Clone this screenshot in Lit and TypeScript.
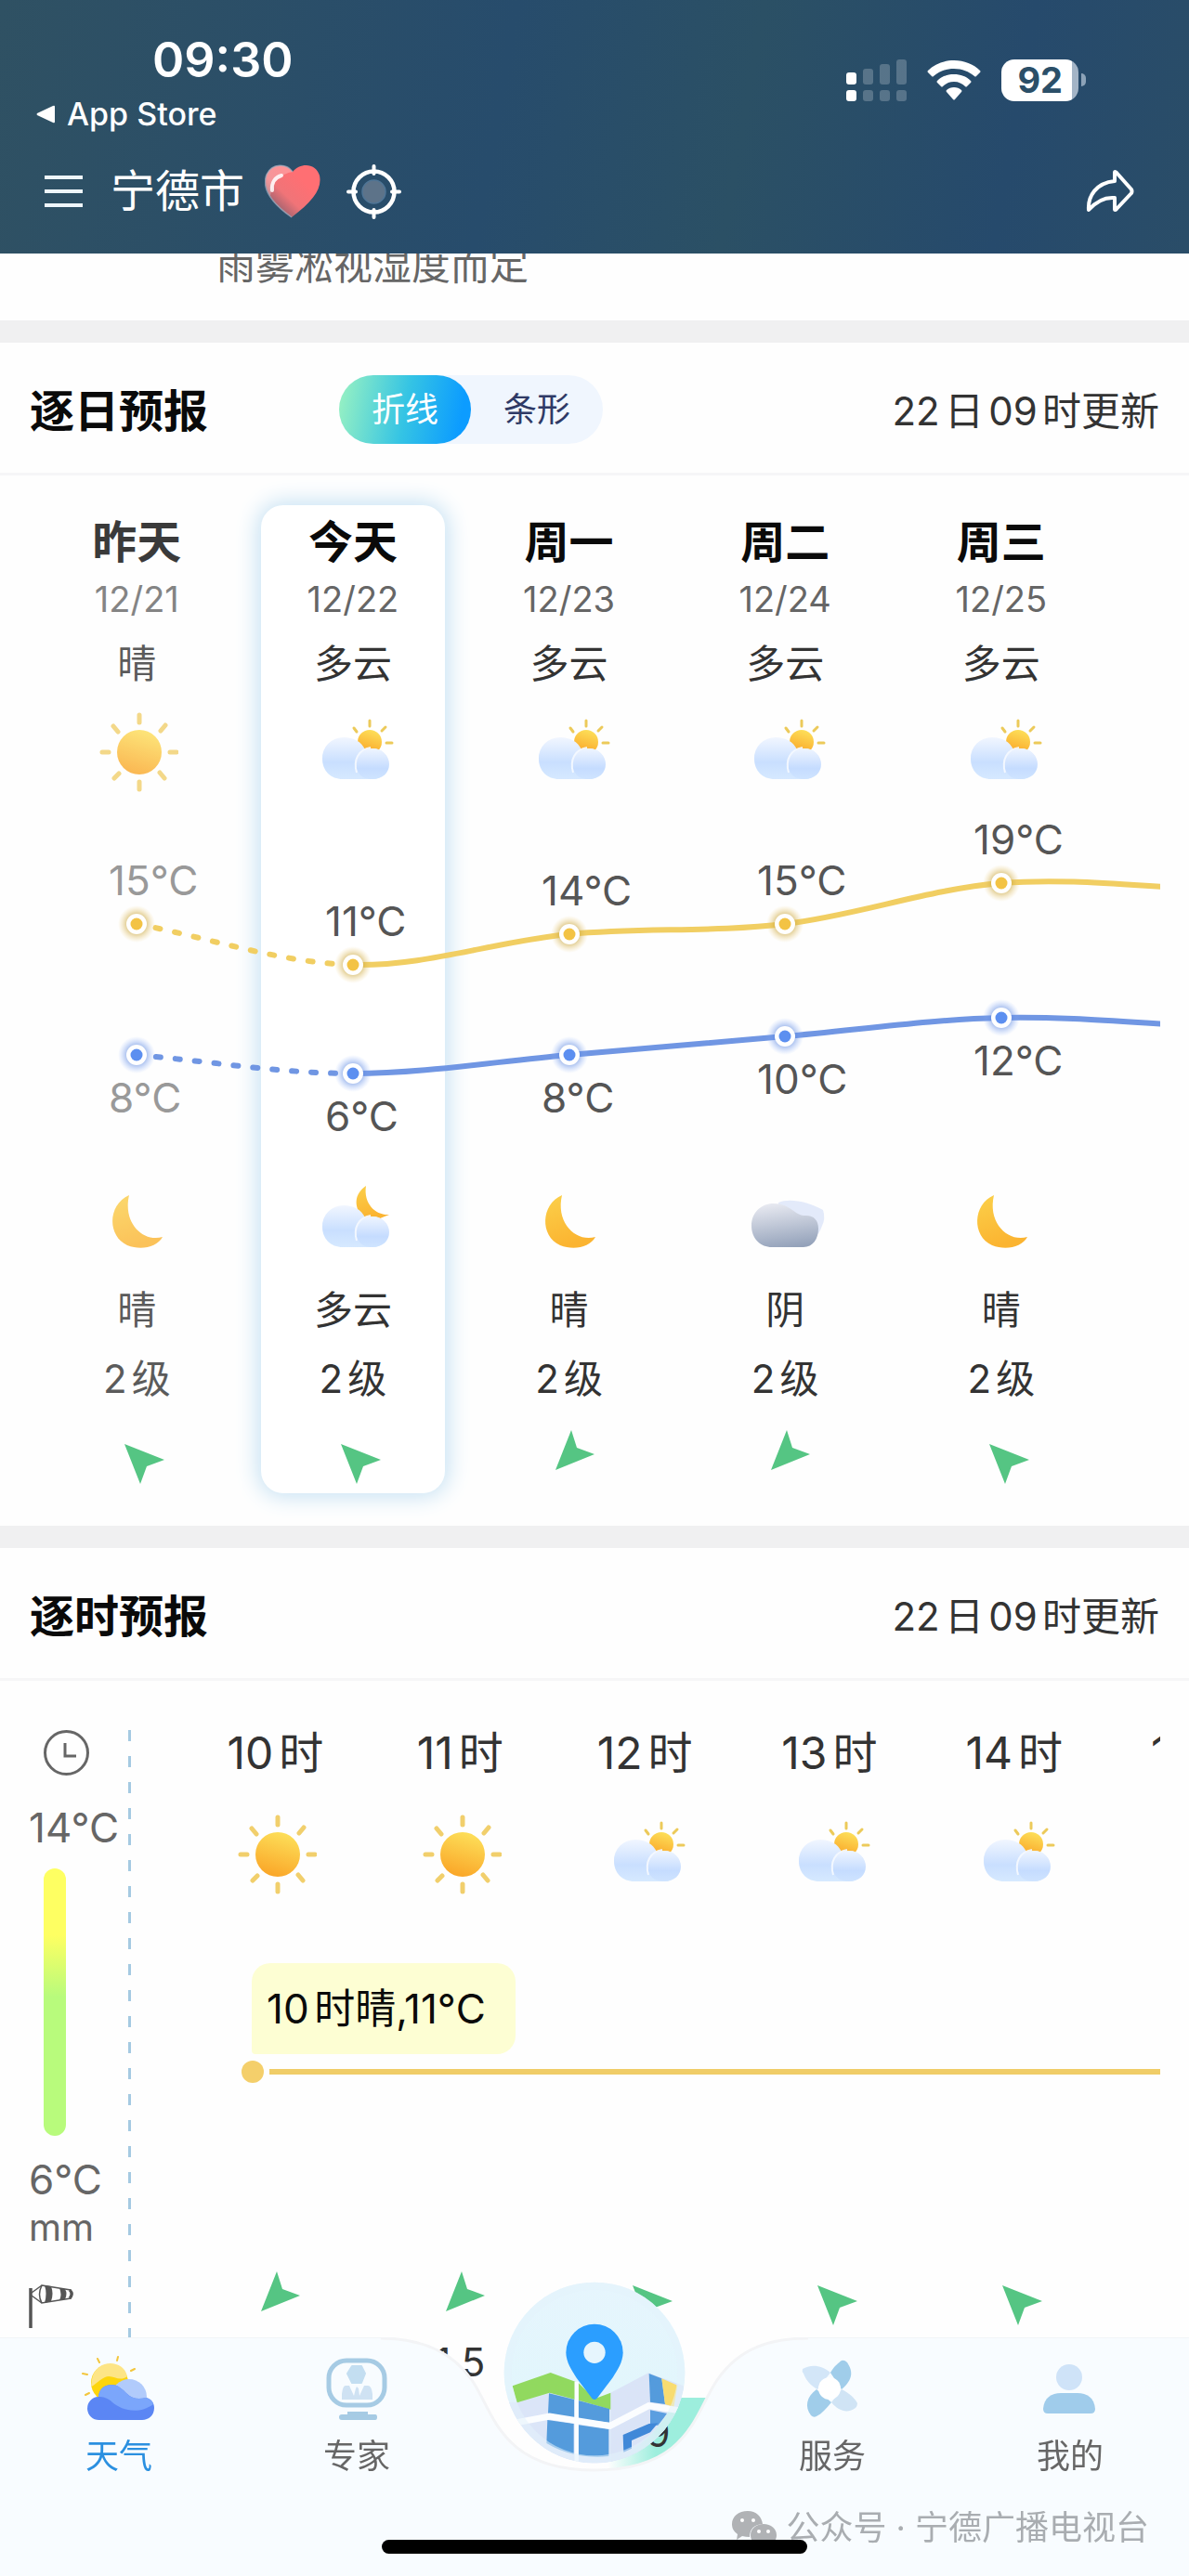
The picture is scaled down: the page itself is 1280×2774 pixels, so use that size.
import { LitElement, html, svg, css } from "lit";
import { customElement, state } from "lit/decorators.js";
import { classMap } from "lit/directives/class-map.js";

type Icon = "sun" | "sunCloud" | "moon" | "moonCloud" | "overcast";
type Wind = "nw" | "sw";

interface Day {
  name: string;
  date: string;
  text: string;
  icon: Icon;
  high: number;
  low: number;
  nightIcon: Icon;
  nightText: string;
  wind: Wind;
}

const DAYS: Day[] = [
  { name: "昨天", date: "12/21", text: "晴", icon: "sun", high: 15, low: 8, nightIcon: "moon", nightText: "晴", wind: "nw" },
  { name: "今天", date: "12/22", text: "多云", icon: "sunCloud", high: 11, low: 6, nightIcon: "moonCloud", nightText: "多云", wind: "nw" },
  { name: "周一", date: "12/23", text: "多云", icon: "sunCloud", high: 14, low: 8, nightIcon: "moon", nightText: "晴", wind: "sw" },
  { name: "周二", date: "12/24", text: "多云", icon: "sunCloud", high: 15, low: 10, nightIcon: "overcast", nightText: "阴", wind: "sw" },
  { name: "周三", date: "12/25", text: "多云", icon: "sunCloud", high: 19, low: 12, nightIcon: "moon", nightText: "晴", wind: "nw" },
];

// The curves run on to the next day, which lies past the right edge.
const HIGHS = [...DAYS.map((d) => d.high), 18.4];
const LOWS = [...DAYS.map((d) => d.low), 11];

interface Hour {
  label: string;
  icon: Icon;
  wind: Wind;
  value?: string;
  bar?: string;
}

const HOURS: Hour[] = [
  { label: "10时", icon: "sun", wind: "sw" },
  { label: "11时", icon: "sun", wind: "sw", value: "1.5" },
  { label: "12时", icon: "sunCloud", wind: "nw", bar: "1.9" },
  { label: "13时", icon: "sunCloud", wind: "nw" },
  { label: "14时", icon: "sunCloud", wind: "nw" },
  { label: "15时", icon: "sunCloud", wind: "nw" },
];

const CHART_W = 1218;
const CHART_H = 384;
const STEP = CHART_W * 0.191;
const px = (i: number) => Math.round(STEP * (i + 0.5));
const highY = (t: number) => Math.round(125 + (15 - t) * 11);
const lowY = (t: number) => 266 + (8 - t) * 10;

/** Cubic segments through the points, with Catmull-Rom tangents. */
function segments(ys: number[]): string[] {
  const slope = (i: number) =>
    (ys[Math.min(i + 1, ys.length - 1)] - ys[Math.max(i - 1, 0)]) / (i === 0 || i === ys.length - 1 ? 1 : 2);
  const out: string[] = [];
  for (let i = 0; i < ys.length - 1; i++) {
    const third = STEP / 3;
    out.push(
      `C${px(i) + third},${ys[i] + slope(i) / 3} ${px(i + 1) - third},${ys[i + 1] - slope(i + 1) / 3} ${px(i + 1)},${ys[i + 1]}`
    );
  }
  return out;
}

const defs = html`
  <svg class="defs" width="0" height="0" aria-hidden="true">
    <defs>
      <linearGradient id="gSun" x1="0.7" y1="0" x2="0.4" y2="1">
        <stop offset="0" stop-color="#fde05a" /><stop offset="1" stop-color="#faa628" />
      </linearGradient>
      <linearGradient id="gMoon" x1="0" y1="0" x2="0.3" y2="1">
        <stop offset="0" stop-color="#fbd04a" /><stop offset="1" stop-color="#fbb431" />
      </linearGradient>
      <linearGradient id="gCloud" x1="0" y1="0" x2="0" y2="1">
        <stop offset="0" stop-color="#f1f6ff" /><stop offset="0.6" stop-color="#c9dfff" /><stop offset="1" stop-color="#d6e9ff" />
      </linearGradient>
      <linearGradient id="gPuff" x1="0" y1="0" x2="0" y2="1">
        <stop offset="0" stop-color="#eff5ff" /><stop offset="0.65" stop-color="#c5dcff" /><stop offset="1" stop-color="#cfe4ff" />
      </linearGradient>
      <linearGradient id="gOver" x1="0.4" y1="0" x2="0.6" y2="1">
        <stop offset="0" stop-color="#e6e8f0" /><stop offset="1" stop-color="#94a2ba" />
      </linearGradient>
      <linearGradient id="gHeart" x1="0.1" y1="0.9" x2="0.7" y2="0.3">
        <stop offset="0" stop-color="#7d5b6b" /><stop offset="0.5" stop-color="#f07478" /><stop offset="1" stop-color="#ff6f73" />
      </linearGradient>
      <radialGradient id="gHighGlow">
        <stop offset="0.5" stop-color="#c9a63e" stop-opacity="0.6" /><stop offset="1" stop-color="#f0d080" stop-opacity="0" />
      </radialGradient>
      <radialGradient id="gLowGlow">
        <stop offset="0.5" stop-color="#5b86dd" stop-opacity="0.55" /><stop offset="1" stop-color="#8fb3ff" stop-opacity="0" />
      </radialGradient>
      <linearGradient id="gDisc" x1="0" y1="0" x2="0" y2="1">
        <stop offset="0" stop-color="#e6f5fd" /><stop offset="0.6" stop-color="#e2f6fc" /><stop offset="1" stop-color="#dce9fa" />
      </linearGradient>
      <linearGradient id="gTeal" x1="0" y1="0.6" x2="1" y2="0.4">
        <stop offset="0.2" stop-color="#c4f1ea" stop-opacity="0" /><stop offset="0.7" stop-color="#b5ede4" />
      </linearGradient>
      <clipPath id="discClip"><circle cx="540" cy="405" r="292" /></clipPath>
    </defs>
  </svg>
`;

const cloudBody = svg`
  <path d="M35 29a23 22 0 0 0-23 23c0 13 9 22 22 22h32c10 0 17-8 17-17s-7-16-17-16c-4 0-6 0-8 1-4-8-12-13-23-13z" fill="url(#gCloud)"/>
  <path d="M51 67c-2-3-3-6-3-9a18 17 0 0 1 36 0c0 9-7 16-18 16-7 0-12-2-15-7z" fill="url(#gPuff)"/>
  <path d="M49 67c-4-14 2-25 15-27" fill="none" stroke="#f6faff" stroke-width="2" opacity="0.9"/>
`;

const ICONS = {
  sun: svg`
    <circle cx="48" cy="45" r="24" fill="url(#gSun)"/>
    <g stroke="#f1cf6c" stroke-width="5" stroke-linecap="round">
      <path d="M48 5v8M48 77v8M8 45h7M81 45h7M20 17l5 6M76 16l-5 6M21 73l5-5M75 73l-5-6"/>
    </g>`,
  sunCloud: svg`
    <circle cx="63" cy="34" r="13" fill="url(#gSun)"/>
    <path d="M63 11v6M46 19l3 4M80 18l-4 4M81 35h6" stroke="#ecca5a" stroke-width="3" stroke-linecap="round"/>
    ${cloudBody}`,
  moon: svg`<path d="M37 18C14 28 13 62 35 72c15 6 32 2 38-9C52 69 30 48 37 18z" fill="url(#gMoon)"/>`,
  moonCloud: svg`
    <path d="M59 8C46 17 46 30 55 42L74 43 84 39C70 40 56 28 59 8z" fill="url(#gMoon)"/>
    ${cloudBody}`,
  overcast: svg`
    <path d="M38 26C50 21 70 25 86 34q3 9-1 17-3 9-9 14L40 50z" fill="#e3eafa"/>
    <path d="M33 27c-14 0-24 10-24 24s10 23 22 23h34c10 0 16-9 16-20 0-9-5-14-13-14-7 0-9-2-15-6-6-4-11-7-20-7z" fill="url(#gOver)"/>`,
};

const weatherIcon = (icon: Icon) =>
  html`<svg class="weather" viewBox="0 0 90 90" aria-hidden="true">${ICONS[icon]}</svg>`;

const windArrow = (wind: Wind) => html`
  <svg class="wind" viewBox="0 0 60 64" aria-hidden="true">
    <path
      fill="#55c583"
      d=${wind === "nw" ? "M17 17L60 34 41 41 34 60z" : "M15 45L32 2 38 21 57 28z"}
    />
  </svg>
`;

@customElement("app-root")
export class AppRoot extends LitElement {
  @state() private mode: "line" | "bar" = "line";

  static styles = css`
    :host {
      display: block;
      min-height: 100vh;
      position: relative;
      overflow: hidden;
      background: #fefefe;
      color: #333;
      font-family: Inter, "Noto Sans CJK SC", "Noto Sans", sans-serif;
      font-size: 42px;
      text-autospace: normal;
    }
    * { box-sizing: border-box; }
    button { border: 0; background: none; padding: 0; font: inherit; color: inherit; cursor: pointer; }
    h2, p, ol { margin: 0; padding: 0; list-style: none; }
    svg { display: block; }
    .defs { position: absolute; }

    .top {
      padding: 33px 59px 27px 48px;
      color: #fff;
      background: linear-gradient(100deg, #2f5163 0%, #274c6c 42%, #2b5065 62%, #264a6c 84%, #2a4d68 100%);
    }
    .status { display: flex; justify-content: space-between; align-items: center; }
    .time { padding-left: 116px; font-size: 52px; font-weight: 600; line-height: 64px; }
    .back { display: flex; align-items: center; gap: 12px; margin: 6px 0 0 -10px; font-size: 34px; font-weight: 500; line-height: 40px; color: inherit; text-decoration: none; }
    .signals { display: flex; align-items: center; gap: 22px; padding: 0 52px 4px 0; }
    .battery { display: flex; align-items: center; gap: 3px; }
    .charge { padding: 0 17px; border-radius: 14px; background: linear-gradient(90deg, #fff 92%, #a3b4c6 92%); color: #2b4f68; font-size: 38px; font-weight: 700; line-height: 45px; }
    .nub { width: 5px; height: 14px; border-radius: 0 6px 6px 0; background: #8da3b8; }
    .bar { display: flex; align-items: center; height: 80px; margin-top: 23px; }
    .city { margin-left: 30px; font-size: 48px; line-height: 80px; }
    .heart { margin-left: 22px; }
    .locate { margin-left: 28px; }
    .share { margin-left: auto; }

    .note { height: 72px; overflow: hidden; color: #666; }
    .note p { margin: -8px 0 0 233px; line-height: 42px; }

    .panel { border-top: 24px solid #f0f0f1; }
    .head { display: flex; align-items: center; height: 143px; padding: 0 32px; border-bottom: 3px solid #f6f6f7; }
    h2 { font-size: 48px; font-weight: 700; color: #0a0a0a; }
    .updated { margin-left: auto; }
    .switch { display: flex; margin: 4px 0 0 141px; border-radius: 37px; background: #f0f6fe; }
    .switch button { width: 142px; line-height: 74px; border-radius: 37px; font-size: 36px; color: #2f3a66; }
    .switch .on { color: #fff; background: linear-gradient(100deg, #93efc4 4%, #35c4e4 50%, #0c9cff 90%); }

    .daily { display: grid; grid-template-columns: 100%; margin: 32px 31px 35px; }
    .today { grid-area: 1 / 1 / 4 / 2; width: 16.3%; margin-left: 20.5%; border-radius: 24px; background: #fff; box-shadow: 0 0 24px 3px #c3e0f3; }
    .cells { display: grid; grid-auto-flow: column; grid-auto-columns: 19.1%; grid-column: 1; text-align: center; }
    .cells.day { grid-row: 1; padding-top: 12px; }
    .cells.night { grid-row: 3; padding-bottom: 6px; }
    .cells li { display: flex; flex-direction: column; align-items: center; }
    .past > span, .past > .weather { opacity: 0.8; }
    .name { font-size: 48px; font-weight: 700; line-height: 56px; color: #0a0a0a; }
    .date { font-size: 38px; line-height: 66px; color: #666; }
    .cond { line-height: 74px; }
    .level { line-height: 74px; }
    .weather { width: 90px; height: 90px; margin: 15px 0; }
    .day .weather { margin: 13px 0 15px; }
    .wind { width: 60px; height: 64px; }
    .night .wind { margin-top: 16px; }
    .chart { grid-area: 2 / 1; width: 100%; height: auto; overflow: hidden; }
    .chart text { font-size: 44px; fill: #555; }
    .chart .past { fill: #999; }

    .hourly { display: flex; padding: 53px 31px 0; }
    .axis { display: flex; flex-direction: column; align-items: flex-start; width: 107px; color: #666; font-size: 44px; white-space: nowrap; }
    .clock { margin-left: 16px; }
    .max { margin-top: 28px; line-height: 56px; }
    .scale { width: 24px; height: 288px; margin: 16px 0 20px 16px; border-radius: 12px; background: linear-gradient(#feff62 25%, #b8fb7c 48%); }
    .min { line-height: 54px; }
    .unit { font-size: 40px; line-height: 50px; }
    .sock { margin-top: 36px; }
    .rule { width: 3px; margin-right: 56px; background: repeating-linear-gradient(#a5cae2 0 12px, transparent 12px 28px); }
    .hours { flex: 1; min-width: 0; overflow: hidden; }
    .hours .cells { grid-auto-columns: 18.9%; }
    .hour { font-size: 48px; line-height: 50px; white-space: nowrap; }
    .hours .weather { margin: 39px 0 16px; }
    .tip { width: fit-content; margin: 56px 0 7px 74px; padding: 0 32px 0 16px; border-radius: 20px 20px 20px 4px; background: #fdfed3; color: #0a0a0a; font-size: 44px; line-height: 98px; }
    .trend { display: flex; align-items: center; gap: 6px; margin: 0 0 201px 63px; }
    .dot { width: 24px; height: 24px; border-radius: 50%; background: #f4cf6b; }
    .line { flex: 1; height: 6px; background: #f0cd68; }
    .value { margin-top: 16px; line-height: 40px; }
    .level-bar { align-self: stretch; margin-top: 74px; background: linear-gradient(90deg, transparent 30%, #9deedd 56%); line-height: 76px; }

    .tabs { position: fixed; left: 0; right: 0; bottom: 0; height: 257px; }
    .shelf { position: absolute; inset: 0; display: flex; }
    .shelf .side { flex: 1; background: #f8fcff; border-top: 1px solid #f1f5f8; }
    .items { position: relative; display: grid; grid-template-columns: repeat(5, 1fr); }
    .items a { display: flex; flex-direction: column; align-items: center; padding-top: 19px; color: #666; font-size: 36px; line-height: 48px; text-decoration: none; }
    .items a svg { width: 80px; height: 72px; margin-bottom: 13px; }
    .items .active { color: #2b90e0; }
    .items .map { padding: 0; }
    .items .map svg { width: 196px; height: 196px; margin: -60px 0 0; }
    .brand { position: absolute; right: 43px; bottom: 28px; display: flex; align-items: center; gap: 10px; color: #a9adb1; font-size: 36px; line-height: 48px; text-autospace: no-autospace; }
    .home { position: absolute; left: 32.1%; width: 35.8%; bottom: 24px; height: 15px; border-radius: 8px; background: #000; }
  `;

  private renderTop() {
    const dots = [0, 1, 2, 3];
    return html`
      <header class="top">
        <div class="status">
          <div>
            <div class="time">09:30</div>
            <a class="back" href="#store">
              <svg width="22" height="20" viewBox="0 0 22 20" aria-hidden="true"><path d="M19 1L2 9q-1 1 0 2l17 8q2 1 2-1V2q0-2-2-1z" fill="#fff" /></svg>
              App Store
            </a>
          </div>
          <div class="signals">
            <svg width="65" height="45" viewBox="0 0 65 45" aria-hidden="true">
              ${dots.map(
                (i) => svg`
                <rect x=${i * 18} y=${14 - [0, 4, 9, 14][i]} width="11" height=${13 + [0, 4, 9, 14][i]} rx="3" fill="#fff" opacity=${i ? 0.22 : 1}/>
                <rect x=${i * 18} y="33" width="11" height="12" rx="3" fill="#fff" opacity=${i ? 0.22 : 1}/>`
              )}
            </svg>
            <svg width="58" height="43" viewBox="0 0 58 43" aria-hidden="true">
              <path d="M29 0C18 0 8 4 1 11q-1 1 0 2l4 4q1 1 2 0C13 12 20 9 29 9s16 3 22 8q1 1 2 0l4-4q1-1 0-2C50 4 40 0 29 0z" fill="#fff" />
              <path d="M29 15c-7 0-13 2-18 7q-1 1 0 2l4 4q1 1 2 0c3-3 7-5 12-5s9 2 12 5q1 1 2 0l4-4q1-1 0-2c-5-5-11-7-18-7z" fill="#fff" />
              <path d="M29 29c-3 0-6 1-8 3q-1 1 0 2l7 8q1 1 2 0l7-8q1-1 0-2c-2-2-5-3-8-3z" fill="#fff" />
            </svg>
            <div class="battery"><span class="charge">92</span><span class="nub"></span></div>
          </div>
        </div>
        <div class="bar">
          <button aria-label="菜单">
            <svg width="41" height="36" viewBox="0 0 41 36"><path d="M0 3h41M0 18h41M0 33h41" stroke="#eef6fb" stroke-width="4" /></svg>
          </button>
          <span class="city">宁德市</span>
          <svg class="heart" width="60" height="58" viewBox="0 0 60 58" aria-hidden="true">
            <path d="M30 8C24-1 8-2 2 11c-5 13 3 29 27 46C52 40 62 26 59 12 55-2 38-2 30 8z" fill="url(#gHeart)" />
            <path d="M30 8C24-1 8-2 2 11c-2 8-1 14 4 23C8 18 18 10 30 8z" fill="#fff" opacity="0.25" />
            <path d="M8 28c-1-8 3-14 10-16" fill="none" stroke="#fff" stroke-width="4" stroke-linecap="round" opacity="0.85" />
            <path d="M30 8C24-1 8-2 2 11c-5 13 3 29 27 46" fill="none" stroke="#9fb0c4" stroke-width="1.5" opacity="0.7" />
          </svg>
          <button class="locate" aria-label="定位">
            <svg width="59" height="59" viewBox="0 0 59 59">
              <circle cx="29.5" cy="29.5" r="22" fill="none" stroke="#fff" stroke-width="4.5" />
              <circle cx="29.5" cy="29.5" r="12.5" fill="#5d7389" stroke="#4f7596" stroke-width="1.5" />
              <path d="M29.5 2v8M29.5 49v8M2 29.5h8M49 29.5h8" stroke="#fff" stroke-width="4" stroke-linecap="round" />
            </svg>
          </button>
          <button class="share" aria-label="分享">
            <svg width="52" height="46" viewBox="0 0 52 46">
              <path d="M31 3q0-2 2 0l16 18q1 2 0 4L33 42q-2 2-2 0V30C20 29 11 34 3 43 2 28 11 14 31 12z" fill="none" stroke="#fff" stroke-width="4" stroke-linejoin="round" />
            </svg>
          </button>
        </div>
      </header>
    `;
  }

  private renderCurve(ys: number[], color: string) {
    const [first, ...rest] = segments(ys);
    return svg`
      <g fill="none" stroke=${color} stroke-width="6">
        <path d=${`M${px(0)},${ys[0]}${first}`} stroke-dasharray="5 16" stroke-linecap="round"/>
        <path d=${`M${px(1)},${ys[1]}${rest.join("")}`}/>
      </g>`;
  }

  private renderPoints(ys: number[], fill: string, glow: string) {
    return ys.slice(0, DAYS.length).map(
      (y, i) => svg`
        <circle cx=${px(i)} cy=${y} r="20" fill=${glow}/>
        <circle cx=${px(i)} cy=${y} r="11" fill="#fff"/>
        <circle cx=${px(i)} cy=${y} r="6.5" fill=${fill}/>`
    );
  }

  private renderChart() {
    const highs = HIGHS.map(highY);
    const lows = LOWS.map(lowY);
    return html`
      <svg class="chart" viewBox="0 0 ${CHART_W} ${CHART_H}" role="img" aria-label="气温">
        ${this.renderCurve(highs, "#f1ce62")} ${this.renderCurve(lows, "#7096e3")}
        ${this.renderPoints(highs, "#f3c344", "url(#gHighGlow)")}
        ${this.renderPoints(lows, "#5c8ff0", "url(#gLowGlow)")}
        ${DAYS.map(
          (d, i) => svg`
            <text class=${i ? "" : "past"} x=${px(i) - 30} y=${highs[i] - 31}>${d.high}°C</text>
            <text class=${i ? "" : "past"} x=${px(i) - 30} y=${lows[i] + 62}>${d.low}°C</text>`
        )}
      </svg>
    `;
  }

  private renderDaily() {
    return html`
      <section class="panel">
        <div class="head">
          <h2>逐日预报</h2>
          <div class="switch" role="group">
            <button class=${classMap({ on: this.mode === "line" })} @click=${() => (this.mode = "line")}>折线</button>
            <button class=${classMap({ on: this.mode === "bar" })} @click=${() => (this.mode = "bar")}>条形</button>
          </div>
          <span class="updated">22日09时更新</span>
        </div>
        <div class="daily">
          <div class="today"></div>
          <ol class="cells day">
            ${DAYS.map(
              (d, i) => html`<li class=${classMap({ past: i === 0 })}>
                <span class="name">${d.name}</span>
                <span class="date">${d.date}</span>
                <span class="cond">${d.text}</span>
                ${weatherIcon(d.icon)}
              </li>`
            )}
          </ol>
          ${this.renderChart()}
          <ol class="cells night">
            ${DAYS.map(
              (d, i) => html`<li class=${classMap({ past: i === 0 })}>
                ${weatherIcon(d.nightIcon)}
                <span class="cond">${d.nightText}</span>
                <span class="level">2级</span>
                ${windArrow(d.wind)}
              </li>`
            )}
          </ol>
        </div>
      </section>
    `;
  }

  private renderHourly() {
    return html`
      <section class="panel">
        <div class="head">
          <h2>逐时预报</h2>
          <span class="updated">22日09时更新</span>
        </div>
        <div class="hourly">
          <div class="axis">
            <svg class="clock" width="49" height="49" viewBox="0 0 49 49" aria-hidden="true">
              <circle cx="24.5" cy="24.5" r="23" fill="none" stroke="#666" stroke-width="3" />
              <path d="M23 14v14h12" fill="none" stroke="#666" stroke-width="3" />
            </svg>
            <span class="max">14°C</span>
            <span class="scale"></span>
            <span class="min">6°C</span>
            <span class="unit">mm</span>
            <svg class="sock" width="50" height="48" viewBox="0 0 50 48" aria-hidden="true">
              <path d="M2 4v43" stroke="#555" stroke-width="3.5" />
              <path d="M3 9L14 1M3 12L14 20" stroke="#555" stroke-width="1.5" />
              <path d="M14 1L45 6q4 4 0 9L14 20q-5-9 0-19z" fill="#fefefe" stroke="#555" stroke-width="1.5" />
              <path d="M17 1l7 1q3 8 0 16l-7 2q3-10 0-19zM33 4l6 1q3 5 0 11l-6 1q3-6 0-13z" fill="#555" />
              <path d="M44 6q4 4 0 9" fill="none" stroke="#555" stroke-width="3" />
            </svg>
          </div>
          <div class="rule"></div>
          <div class="hours">
            <ol class="cells">
              ${HOURS.map((h) => html`<li><span class="hour">${h.label}</span>${weatherIcon(h.icon)}</li>`)}
            </ol>
            <p class="tip">10时晴,11°C</p>
            <div class="trend"><span class="dot"></span><span class="line"></span></div>
            <ol class="cells">
              ${HOURS.map(
                (h) => html`<li>
                  ${windArrow(h.wind)}
                  ${h.value ? html`<span class="value">${h.value}</span>` : ""}
                  ${h.bar ? html`<span class="level-bar">${h.bar}</span>` : ""}
                </li>`
              )}
            </ol>
          </div>
        </div>
      </section>
    `;
  }

  private renderMapIcon() {
    return html`
      <svg viewBox="246 111 588 588" aria-hidden="true">
        <circle cx="540" cy="405" r="292" fill="url(#gDisc)" />
        <g clip-path="url(#discClip)">
          <path d="M250 500L290 500 398 470 590 520 590 700H300z" fill="#dbe5f8" />
          <path d="M592 470L714 406 834 450V560L700 680 592 700z" fill="#dae4f7" />
          <path d="M560 700Q700 660 780 530L850 500V700z" fill="url(#gTeal)" />
          <path d="M275 448L398 405 478 434V492L395 470 290 502z" fill="#91d95f" />
          <path d="M488 438L540 490 592 470V524L488 494z" fill="#91d95f" />
          <path d="M393 472L475 492V552L390 536zM488 495L588 522V566L488 554z" fill="#549bdc" />
          <path d="M388 558L473 570V668Q430 660 385 633zM488 574L586 588V675Q540 680 488 672z" fill="#549bdc" />
          <path d="M716 408L757 424 768 507 720 500z" fill="#549bdc" />
          <path d="M757 424L808 446 796 517 768 507z" fill="#f8dc70" />
          <path d="M720 526L775 537 745 575 720 575z" fill="#5b9ee0" />
          <path d="M632 606L716 570 745 568 720 598 660 624V650L634 662z" fill="#4088d8" />
          <path d="M290 566L395 546 590 577 715 512 830 530" fill="none" stroke="#fbfdff" stroke-width="21" />
          <path d="M482 434V700" stroke="#fbfdff" stroke-width="13" />
        </g>
        <circle cx="540" cy="405" r="280" fill="none" stroke="#e4f2fb" stroke-width="24" opacity="0.55" />
        <path d="M540 248a92 92 0 0 0-92 92c0 30 18 58 34 82l50 66q8 8 16 0l50-66c16-24 34-52 34-82a92 92 0 0 0-92-92z" fill="#2b9eff" />
        <circle cx="540" cy="340" r="35" fill="#e6f5fd" />
      </svg>
    `;
  }

  private renderTabs() {
    return html`
      <nav class="tabs">
        <div class="shelf">
          <div class="side"></div>
          <svg width="460" height="257" viewBox="0 0 460 257" aria-hidden="true">
            <path d="M0 0C40 0 75 12 98 45S128 142 230 142 338 80 362 45 420 0 460 0V257H0z" fill="#f8fcff" />
            <path d="M0 1C40 1 75 13 98 46S128 143 230 143 338 81 362 46 420 1 460 1" fill="none" stroke="#f3f4f6" stroke-width="3" />
          </svg>
          <div class="side"></div>
        </div>
        <div class="items">
          <a class="active" href="#weather">
            <svg viewBox="0 0 80 72" aria-hidden="true">
              <circle cx="30" cy="30" r="20" fill="#fdd50c" />
              <path d="M11 26C15 4 45 4 49 23 40 30 33 20 25 24S15 32 10 34z" fill="#fde586" />
              <path d="M17 4l2 4M39 2l-1 4M53 17l4-2M1 20l5 1M4 43l4-2" stroke="#f3c63d" stroke-width="2" stroke-linecap="round" />
              <circle cx="51" cy="45" r="19" fill="#b1cbfb" />
              <path d="M19 70a12 12 0 0 1-1-25C19 35 26 32 32 32c7 0 12 5 17 10s12 6 20 4c6 1 9 6 9 11 0 8-6 13-13 13z" fill="#5b86f4" />
              <path d="M18 45C19 35 26 32 32 32c7 0 12 5 17 10s12 6 20 4c4 1 7 3 8 7-16 12-35 6-44-2-5-5-10-6-15-6z" fill="#7ba6fb" />
            </svg>
            天气
          </a>
          <a href="#expert">
            <svg viewBox="0 0 80 72" aria-hidden="true">
              <rect x="10" y="6" width="60" height="48" rx="19" fill="none" stroke="#a6cbe4" stroke-width="5" />
              <path d="M35 12h10l4 8-4 10H35l-5-10z" fill="#c3def1" stroke="#c3def1" stroke-width="2" stroke-linejoin="round" />
              <path d="M24 48V42q1-9 4-9h4l5 11 2-8 1-2 2 2 1 8 5-11h4q4 0 5 9v6z" fill="#cfe2f3" />
              <path d="M30 61h22v3h8q2 0 2 3t-2 3H24q-3 0-3-3t3-3h6z" fill="#a6cbe4" />
            </svg>
            专家
          </a>
          <a class="map" href="#map" aria-label="地图">${this.renderMapIcon()}</a>
          <a href="#service">
            <svg viewBox="0 0 80 72" aria-hidden="true">
              <path d="M38 19C42 12 47 8 50 6q3-1 6 2c6 9 7 18-6 29z" fill="#a0cdea" />
              <path d="M38 19C28 10 16 10 8 15q-1 3 1 5c3 8 8 13 15 17z" fill="#d3e6f8" />
              <path d="M23 37C12 45 10 56 17 65q3 3 6 1c6-3 10-8 16-15z" fill="#a0cdea" />
              <path d="M50 37c8 4 14 9 17 15q0 3-2 5c-8 6-18 4-26-6z" fill="#d0e4f5" />
              <circle cx="37" cy="36" r="12" fill="#fff" />
            </svg>
            服务
          </a>
          <a href="#mine">
            <svg viewBox="0 0 80 72" aria-hidden="true">
              <circle cx="39" cy="24" r="14" fill="#cfe3f8" />
              <path d="M11 58C12 46 20 41 30 41h18c10 0 18 5 19 17q0 5-5 5H16q-5 0-5-5z" fill="#a0cceb" />
            </svg>
            我的
          </a>
        </div>
        <div class="brand">
          <svg width="48" height="36" viewBox="0 0 48 36" aria-hidden="true">
            <path d="M17 0C7 0 0 6 0 14c0 5 2 8 6 11l-1 6 6-4q4 1 8 1 0-13 14-14C32 6 26 0 17 0z" fill="#b0b2b5" />
            <path d="M34 14c-8 0-14 5-14 12s6 11 14 11c8 0 14-4 14-11s-6-12-14-12z" fill="#b0b2b5" />
            <g fill="#fff"><circle cx="11" cy="10" r="2" /><circle cx="23" cy="10" r="2" /><circle cx="29" cy="22" r="2" /><circle cx="39" cy="22" r="2" /></g>
          </svg>
          <span>公众号 · 宁德广播电视台</span>
        </div>
        <div class="home"></div>
      </nav>
    `;
  }

  render() {
    return html`
      ${defs} ${this.renderTop()}
      <div class="note"><p>雨雾凇视湿度而定</p></div>
      ${this.renderDaily()} ${this.renderHourly()} ${this.renderTabs()}
    `;
  }
}
